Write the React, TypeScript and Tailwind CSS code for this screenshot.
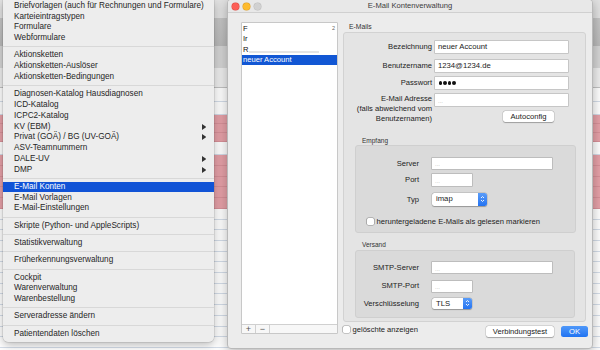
import React from 'react';

type MenuEntry = { label: string; sub?: boolean; active?: boolean } | 'sep';

const MENU: MenuEntry[] = [
  { label: 'Briefvorlagen (auch für Rechnungen und Formulare)' },
  { label: 'Karteieintragstypen' },
  { label: 'Formulare' },
  { label: 'Webformulare' },
  'sep',
  { label: 'Aktionsketten' },
  { label: 'Aktionsketten-Auslöser' },
  { label: 'Aktionsketten-Bedingungen' },
  'sep',
  { label: 'Diagnosen-Katalog Hausdiagnosen' },
  { label: 'ICD-Katalog' },
  { label: 'ICPC2-Katalog' },
  { label: 'KV (EBM)', sub: true },
  { label: 'Privat (GOÄ) / BG (UV-GOÄ)', sub: true },
  { label: 'ASV-Teamnummern' },
  { label: 'DALE-UV', sub: true },
  { label: 'DMP', sub: true },
  'sep',
  { label: 'E-Mail Konten', active: true },
  { label: 'E-Mail Vorlagen' },
  { label: 'E-Mail-Einstellungen' },
  'sep',
  { label: 'Skripte (Python- und AppleScripts)' },
  'sep',
  { label: 'Statistikverwaltung' },
  'sep',
  { label: 'Früherkennungsverwaltung' },
  'sep',
  { label: 'Cockpit' },
  { label: 'Warenverwaltung' },
  { label: 'Warenbestellung' },
  'sep',
  { label: 'Serveradresse ändern' },
  'sep',
  { label: 'Patientendaten löschen' },
];

const FONT = "font-['Liberation_Sans',Arial,sans-serif]";

// spreadsheet of the app behind the menu and the dialog
function Background() {
  const whiteRow = 'h-[10.7px] shrink-0 bg-white border-b border-[#d4dde9]';
  const pinkRow = 'shrink-0 bg-[#e6a1a8] border-b border-[#d89199]';
  return (
    <div className="flex flex-col w-full h-full">
      <div className="h-[18px] shrink-0 bg-[#e2e2e2]" />
      <div className="h-[28px] shrink-0 bg-linear-to-b from-[#c6c6c6] to-[#bababa]" />
      <div className="h-[22px] shrink-0 bg-[#d5d5d5]" />
      <div className="h-[20px] shrink-0 bg-[#eeeeee] border-b border-[#c2c2c2]" />
      <div className="h-[13.5px] shrink-0 bg-white border-b border-[#d4dde9]" />
      <div className="h-[13.5px] shrink-0 bg-white border-b border-[#d4dde9]" />
      <div className={`h-[9px] ${pinkRow}`} />
      <div className={`h-[9px] ${pinkRow}`} />
      <div className={`h-[9px] ${pinkRow}`} />
      <div className="h-[13px] shrink-0 bg-white border-b border-[#d4dde9]" />
      {Array.from({ length: 5 }).map((_, i) => (
        <div key={`p${i}`} className={`h-[10.8px] ${pinkRow}`} />
      ))}
      {Array.from({ length: 14 }).map((_, i) => (
        <div key={`w${i}`} className={whiteRow} />
      ))}
    </div>
  );
}

function Menu() {
  return (
    <div className="absolute left-[3px] top-0 w-[211px] pt-[0.6px] pb-[2.4px] bg-[#ededed] rounded-b-[5px] shadow-[0_3px_10px_rgba(0,0,0,0.28),0_0_0_0.5px_rgba(0,0,0,0.15)] text-[8.2px] text-[#262626]">
      {MENU.map((entry, i) =>
        entry === 'sep' ? (
          <div key={i} className="h-[6.53px] flex items-center">
            <div className="h-px w-full bg-[#d8d8d8]" />
          </div>
        ) : (
          <div
            key={i}
            className={`h-[10.77px] flex items-center pl-[11px] pr-[8px] whitespace-nowrap ${
              entry.active ? 'bg-[#1153d6] text-white' : ''
            }`}
          >
            <span>{entry.label}</span>
            {entry.sub && (
              <svg className="ml-auto" width="4.5" height="6" viewBox="0 0 4.5 6">
                <polygon points="0,0 4.5,3 0,6" fill="#333" />
              </svg>
            )}
          </div>
        )
      )}
    </div>
  );
}

function Input({ className, children }: { className: string; children?: React.ReactNode }) {
  return (
    <div className={`bg-white shadow-[0_0_0_0.6px_rgba(0,0,0,0.22)] flex items-center pl-[3px] text-[7.7px] text-[#1a1a1a] whitespace-nowrap ${className}`}>
      {children ?? <span className="text-[6px] text-[#b4b4b4] leading-none pt-[2px]">...</span>}
    </div>
  );
}

function Select({ className, value }: { className: string; value: string }) {
  return (
    <div className={`flex rounded-[2.5px] bg-white shadow-[0_0.5px_1px_rgba(0,0,0,0.25),0_0_0_0.5px_rgba(0,0,0,0.15)] overflow-hidden ${className}`}>
      <div className="flex-1 pl-[4px] flex items-center text-[7.7px] text-[#1a1a1a]">{value}</div>
      <div className="w-[9px] bg-linear-to-b from-[#5a9cf8] to-[#2373f2] flex items-center justify-center">
        <svg width="5" height="8" viewBox="0 0 5 8">
          <path d="M1 3 L2.5 1.5 L4 3 M1 5 L2.5 6.5 L4 5" stroke="white" strokeWidth="0.9" fill="none" />
        </svg>
      </div>
    </div>
  );
}

function Checkbox({ className }: { className: string }) {
  return <div className={`bg-white rounded-[1.5px] shadow-[0_0_0_0.6px_rgba(0,0,0,0.35)] shrink-0 ${className}`} />;
}

function Button({ className, children }: { className: string; children: React.ReactNode }) {
  return (
    <div className={`bg-white rounded-[2.5px] shadow-[0_0.5px_1px_rgba(0,0,0,0.25),0_0_0_0.5px_rgba(0,0,0,0.15)] flex items-center justify-center text-[7.6px] text-[#1a1a1a] ${className}`}>
      {children}
    </div>
  );
}

function AccountWindow() {
  return (
    <div className="absolute left-[227px] top-[-1px] w-[366px] h-[350px] bg-[#ececec] border border-[#b9b9b9] rounded-[4px] shadow-[0_3px_12px_rgba(0,0,0,0.3)] flex flex-col overflow-hidden">
      {/* title bar */}
      <div className="h-[13px] shrink-0 grid grid-cols-[1fr_auto_1fr] items-center bg-[#e8e8e8] border-b border-[#d0d0d0]">
        <div className="flex items-center gap-[4px] pl-[4px]">
          <span className="w-[7px] h-[7px] rounded-full bg-[#fc5f57] shadow-[0_0_0_0.5px_#de4a42]" />
          <span className="w-[7px] h-[7px] rounded-full bg-[#fdbb2e] shadow-[0_0_0_0.5px_#dd9e24]" />
          <span className="w-[7px] h-[7px] rounded-full bg-[#d1d1d1] shadow-[0_0_0_0.5px_#bcbcbc]" />
        </div>
        <div className="text-[7.6px] text-[#3b3b3b]">E-Mail Kontenverwaltung</div>
        <div />
      </div>

      <div className="flex pt-[10px] pl-[14px] text-[7.6px] text-[#222]">
        {/* account list */}
        <div className="w-[95px] h-[310px] bg-white shadow-[0_0_0_0.6px_rgba(0,0,0,0.25)] flex flex-col text-[#111]">
          <div className="h-[10.5px] flex items-center pl-[1px] pr-[2px]">
            <span>F</span>
            <span className="ml-auto text-[5.5px] text-[#666]">2</span>
          </div>
          <div className="h-[10.5px] flex items-center pl-[1px]">Ir</div>
          <div className="h-[10.5px] flex items-center pl-[1px]">
            <span>R</span>
            <div className="ml-[1px] mt-[5px] w-[70px] h-[1.5px] bg-[#e4e4e4]" />
          </div>
          <div className="h-[10.5px] flex items-center pl-[1px] bg-[#1257d4] text-white">neuer Account</div>
          <div className="mt-auto h-[9px] border-t border-[#d0d0d0] bg-[#f7f7f7] flex text-[#555]">
            <div className="w-[14px] border-r border-[#d0d0d0] flex items-center justify-center text-[9px] leading-none">+</div>
            <div className="w-[14px] border-r border-[#d0d0d0] flex items-center justify-center text-[9px] leading-none">−</div>
          </div>
        </div>

        {/* details */}
        <div className="ml-[6px] w-[245px] flex flex-col">
          <div className="h-[9px] leading-[8px] pl-[6px] text-[6.8px] text-[#333]">E-Mails</div>
          <div className="w-[243px] h-[290px] rounded-[3px] border border-[#d2d2d2] bg-[#e4e4e4] flex flex-col">
            <div className="mt-[8px] flex items-center">
              <div className="w-[88px] text-right">Bezeichnung</div>
              <Input className="ml-[3px] w-[133px] h-[12px]">neuer Account</Input>
            </div>
            <div className="mt-[7px] flex items-center">
              <div className="w-[88px] text-right">Benutzername</div>
              <Input className="ml-[3px] w-[133px] h-[12px]">1234@1234.de</Input>
            </div>
            <div className="mt-[5px] flex items-center">
              <div className="w-[88px] text-right">Passwort</div>
              <Input className="ml-[3px] w-[133px] h-[12px]">
                <span className="flex gap-[1px] pl-[0.5px]">
                  <span className="w-[3.6px] h-[3.6px] rounded-full bg-[#111]" />
                  <span className="w-[3.6px] h-[3.6px] rounded-full bg-[#111]" />
                  <span className="w-[3.6px] h-[3.6px] rounded-full bg-[#111]" />
                  <span className="w-[3.6px] h-[3.6px] rounded-full bg-[#111]" />
                </span>
              </Input>
            </div>
            <div className="mt-[4.5px] flex items-start">
              <div className="w-[88px] text-right leading-[10px] pt-[0.5px]">
                E-Mail Adresse
                <br />
                (falls abweichend vom
                <br />
                Benutzernamen)
              </div>
              <div className="ml-[3px] flex flex-col">
                <Input className="w-[133px] h-[12px]" />
                <Button className="mt-[5.5px] ml-[68px] w-[51px] h-[10.5px]">Autoconfig</Button>
              </div>
            </div>

            <div className="mt-[13px] h-[8px] leading-[8px] pl-[18px] text-[6.5px] text-[#333]">Empfang</div>
            <div className="ml-[11px] w-[221px] h-[88px] rounded-[3px] border border-[#cfcfcf] bg-[#dadada] flex flex-col">
              <div className="mt-[11.5px] flex items-center">
                <div className="w-[63px] text-right">Server</div>
                <Input className="ml-[13px] w-[120px] h-[11.5px]" />
              </div>
              <div className="mt-[5px] flex items-center">
                <div className="w-[63px] text-right">Port</div>
                <Input className="ml-[13px] w-[40px] h-[12px]" />
              </div>
              <div className="mt-[7px] flex items-center">
                <div className="w-[63px] text-right">Typ</div>
                <Select className="ml-[13px] w-[55px] h-[12.5px]" value="imap" />
              </div>
              <div className="mt-[10px] flex items-center pl-[11px]">
                <Checkbox className="w-[7px] h-[7px]" />
                <span className="ml-[2.5px]">heruntergeladene E-Mails als gelesen markieren</span>
              </div>
            </div>

            <div className="mt-[8px] h-[8px] leading-[8px] pl-[18px] text-[6.5px] text-[#333]">Versand</div>
            <div className="mt-[1px] ml-[11px] w-[220px] h-[68px] rounded-[3px] border border-[#cfcfcf] bg-[#dadada] flex flex-col">
              <div className="mt-[11px] flex items-center">
                <div className="w-[63px] text-right">SMTP-Server</div>
                <Input className="ml-[13px] w-[120px] h-[11px]" />
              </div>
              <div className="mt-[7px] flex items-center">
                <div className="w-[63px] text-right">SMTP-Port</div>
                <Input className="ml-[13px] w-[40px] h-[11px]" />
              </div>
              <div className="mt-[6px] flex items-center">
                <div className="w-[63px] text-right whitespace-nowrap">Verschlüsselung</div>
                <Select className="ml-[13px] w-[40px] h-[11px]" value="TLS" />
              </div>
            </div>
          </div>

          <div className="pt-[4px] flex items-start">
            <div className="flex items-center h-[6.5px]">
              <Checkbox className="w-[6.5px] h-[6.5px]" />
              <span className="ml-[3px]">gelöschte anzeigen</span>
            </div>
            <Button className="ml-auto w-[68px] h-[11px]">Verbindungstest</Button>
            <div className="ml-[7px] w-[27px] h-[11px] rounded-[2.5px] bg-linear-to-b from-[#4f98f9] to-[#1f73f2] text-white flex items-center justify-center text-[7.6px]">
              OK
            </div>
          </div>
        </div>
      </div>
    </div>
  );
}

export default function App() {
  return (
    <div className={`relative w-[600px] h-[350px] overflow-hidden bg-white ${FONT}`}>
      <Background />
      <Menu />
      <AccountWindow />
    </div>
  );
}
